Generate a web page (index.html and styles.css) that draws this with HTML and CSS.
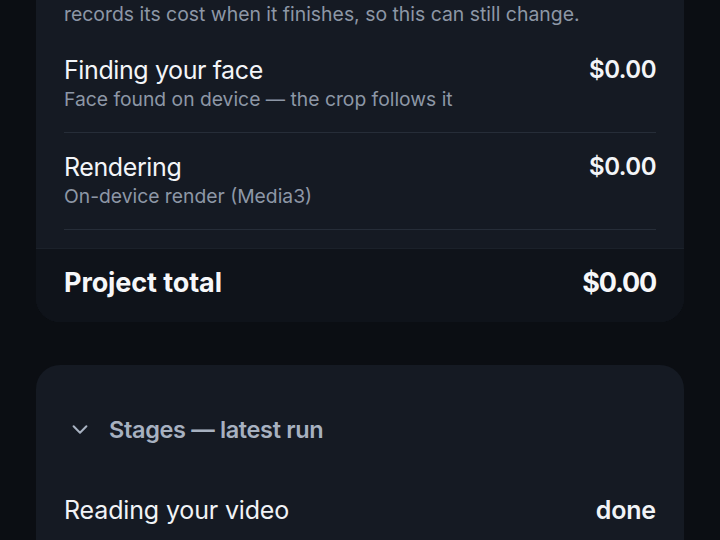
FILE: index.html
```html
<!DOCTYPE html>
<html lang="en">
<head>
<meta charset="utf-8">
<link rel="stylesheet" href="styles.css">
</head>
<body>
<main class="page">
  <section class="card cost-card">
    <p class="note">records its cost when it finishes, so this can still change.</p>
    <div class="row">
      <div class="row-text">
        <div class="row-title">Finding your face</div>
        <div class="row-sub">Face found on device — the crop follows it</div>
      </div>
      <div class="row-value">$0.00</div>
    </div>
    <div class="row">
      <div class="row-text">
        <div class="row-title">Rendering</div>
        <div class="row-sub">On-device render (Media3)</div>
      </div>
      <div class="row-value">$0.00</div>
    </div>
    <div class="total">
      <span class="total-label">Project total</span>
      <span class="total-value">$0.00</span>
    </div>
  </section>

  <section class="card stages-card">
    <div class="stages-head">
      <svg class="chev" width="22" height="22" viewBox="0 0 24 24" fill="none" stroke="currentColor" stroke-width="2.2" stroke-linecap="round" stroke-linejoin="round"><path d="M5 9l7 7 7-7"/></svg>
      <span class="stages-title">Stages — latest run</span>
    </div>
    <div class="stage">
      <span class="stage-name">Reading your video</span>
      <span class="stage-state">done</span>
    </div>
  </section>
</main>
</body>
</html>
```
FILE: styles.css
```css
html, body {
  margin: 0;
  padding: 0;
  background: #0b0e13;
  height: 100%;
  overflow: hidden;
}
body {
  font-family: Inter, Roboto, "Liberation Sans", sans-serif;
  color: #f1f3f6;
}
.page {
  margin-top: -27px;
  padding: 0 36px;
  display: flex;
  flex-direction: column;
  gap: 43px;
}
.card {
  background: #151a23;
  border-radius: 24px;
  overflow: hidden;
  padding: 28px 28px 0;
}
.note {
  margin: 0 0 9px;
  font-size: 19.4px;
  line-height: 26px;
  color: #8d97a6;
}
.row {
  display: flex;
  justify-content: space-between;
  align-items: flex-start;
  padding: 19px 0;
  border-bottom: 1px solid #262d38;
}
.row-title {
  font-size: 25px;
  line-height: 30px;
  letter-spacing: -0.4px;
  color: #f3f5f8;
}
.row-sub {
  font-size: 19.3px;
  line-height: 28px;
  color: #8d97a6;
}
.row-value {
  font-size: 24px;
  line-height: 30px;
  font-weight: 600;
  letter-spacing: -0.5px;
  color: #f3f5f8;
}
.total {
  margin: 18px -28px 0;
  padding: 0 28px;
  height: 73px;
  background: #0f131a;
  border-top: 1px solid #1b212a;
  display: flex;
  justify-content: space-between;
  align-items: center;
  font-weight: 700;
  font-size: 27px;
  letter-spacing: -0.1px;
  color: #f6f7f9;
}
.total-label {
  margin-top: -6px;
}
.total-value {
  margin-top: -6px;
  letter-spacing: -1.2px;
}
.stages-card {
  padding-top: 48px;
  min-height: 300px;
}
.stages-head {
  display: flex;
  align-items: center;
  gap: 18px;
  height: 32px;
  color: #a7b1c0;
}
.chev {
  margin-left: 5px;
}
.stages-title {
  font-size: 23.5px;
  font-weight: 600;
  letter-spacing: -0.35px;
}
.stage {
  margin-top: 50px;
  display: flex;
  justify-content: space-between;
  align-items: center;
  font-size: 25px;
  line-height: 30px;
  letter-spacing: -0.15px;
}
.stage-state {
  font-weight: 600;
}
```
